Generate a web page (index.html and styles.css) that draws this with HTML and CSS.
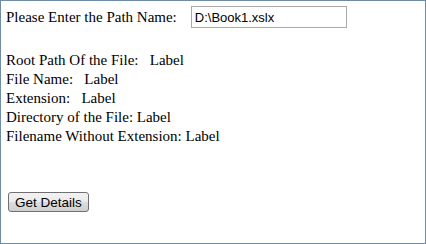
FILE: index.html
```html
<!DOCTYPE html>
<html>
<head>
<meta charset="utf-8">
<link rel="stylesheet" href="styles.css">
</head>
<body>
<div class="frame">
  <div class="row">
    <span class="prompt">Please Enter the Path Name:</span>
    <input class="path" type="text" value="D:\Book1.xslx">
  </div>
  <div class="info">
    <div>Root Path Of the File:&nbsp;&nbsp; Label</div>
    <div>File Name:&nbsp;&nbsp; Label</div>
    <div>Extension:&nbsp;&nbsp; Label</div>
    <div>Directory of the File: Label</div>
    <div>Filename Without Extension: Label</div>
  </div>
  <button class="btn">Get Details</button>
</div>
</body>
</html>
```
FILE: styles.css
```css
html, body {
  margin: 0;
  padding: 0;
  background: #fff;
}
.frame {
  width: 426px;
  height: 244px;
  box-sizing: border-box;
  border: 1px solid #6e8ca6;
  padding: 5px 0 0 5px;
  font-family: "Liberation Serif", serif;
  font-size: 15px;
  color: #000;
  display: flex;
  flex-direction: column;
  align-items: flex-start;
}
.row {
  display: flex;
  align-items: center;
  height: 22px;
}
.prompt {
  margin-right: 14px;
}
.path {
  width: 156px;
  height: 22px;
  box-sizing: border-box;
  border: 1px solid #a9a9a9;
  padding: 0 3px;
  font-family: "Liberation Sans", sans-serif;
  font-size: 13px;
  color: #000;
  margin: 0;
}
.info {
  margin-top: 23px;
  line-height: 19px;
}
.btn {
  margin: 46px 0 0 2px;
  height: 20px;
  padding: 0 6px;
  font-family: "Liberation Sans", sans-serif;
  font-size: 13.5px;
  color: #000;
  border: 1px solid #707070;
  border-radius: 3px;
  background: linear-gradient(#f2f2f2 0%, #ebebeb 50%, #dddddd 51%, #cfcfcf 100%);
}
```
